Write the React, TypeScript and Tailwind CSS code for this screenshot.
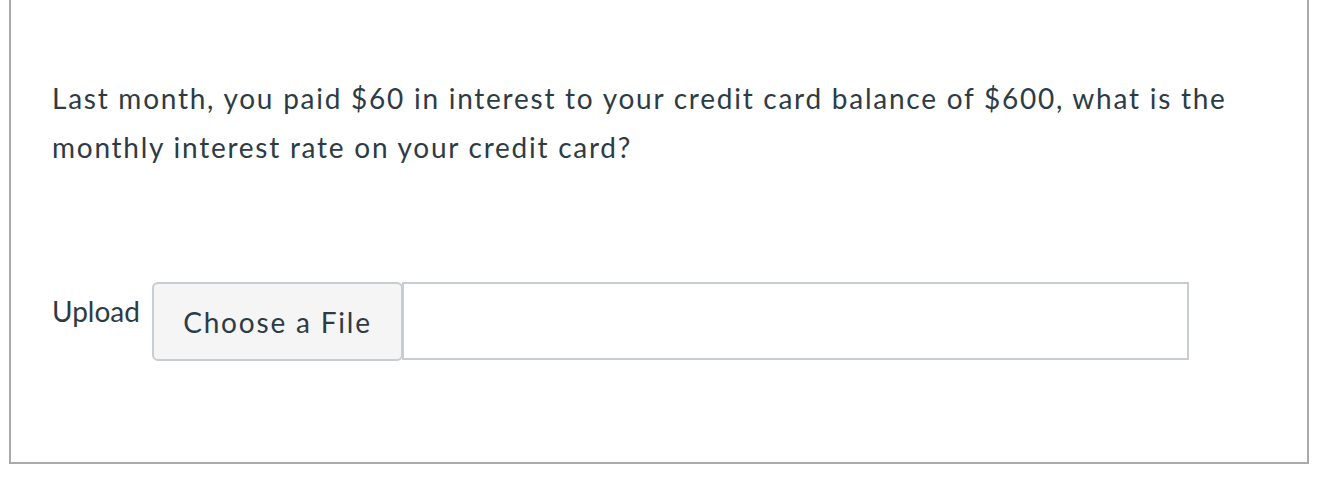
export default function App() {
  return (
    <div className="min-h-screen bg-white pl-[9px] pr-[8px]" style={{ fontFamily: 'Lato, "Noto Sans", sans-serif' }}>
      <div className="border-x-2 border-b-2 border-t-0 border-[#aaaaaa] pl-[41px] pr-[40px] pt-[74px] pb-[101px] text-[#2d3b45]">
        <p className="text-[28px] leading-[49px] tracking-[1.75px]">
          Last month, you paid $60 in interest to your credit card balance of $600, what is the monthly interest rate on
          your credit card?
        </p>
        <div className="mt-[110px] flex items-start">
          <span className="mt-[12px] text-[28px] leading-[34px]">Upload</span>
          <div className="ml-[12px] flex w-[1037px] items-stretch">
            <button
              type="button"
              className="h-[79px] w-[251px] rounded-[6px] border-2 border-[#c7cdd1] bg-[#f5f5f5] text-[28px] tracking-[1.8px] text-[#2d3b45]"
            >
              Choose a File
            </button>
            <div className="-ml-[1px] h-[78px] flex-1 border-2 border-[#c7cdd1] bg-white" />
          </div>
        </div>
      </div>
    </div>
  );
}
